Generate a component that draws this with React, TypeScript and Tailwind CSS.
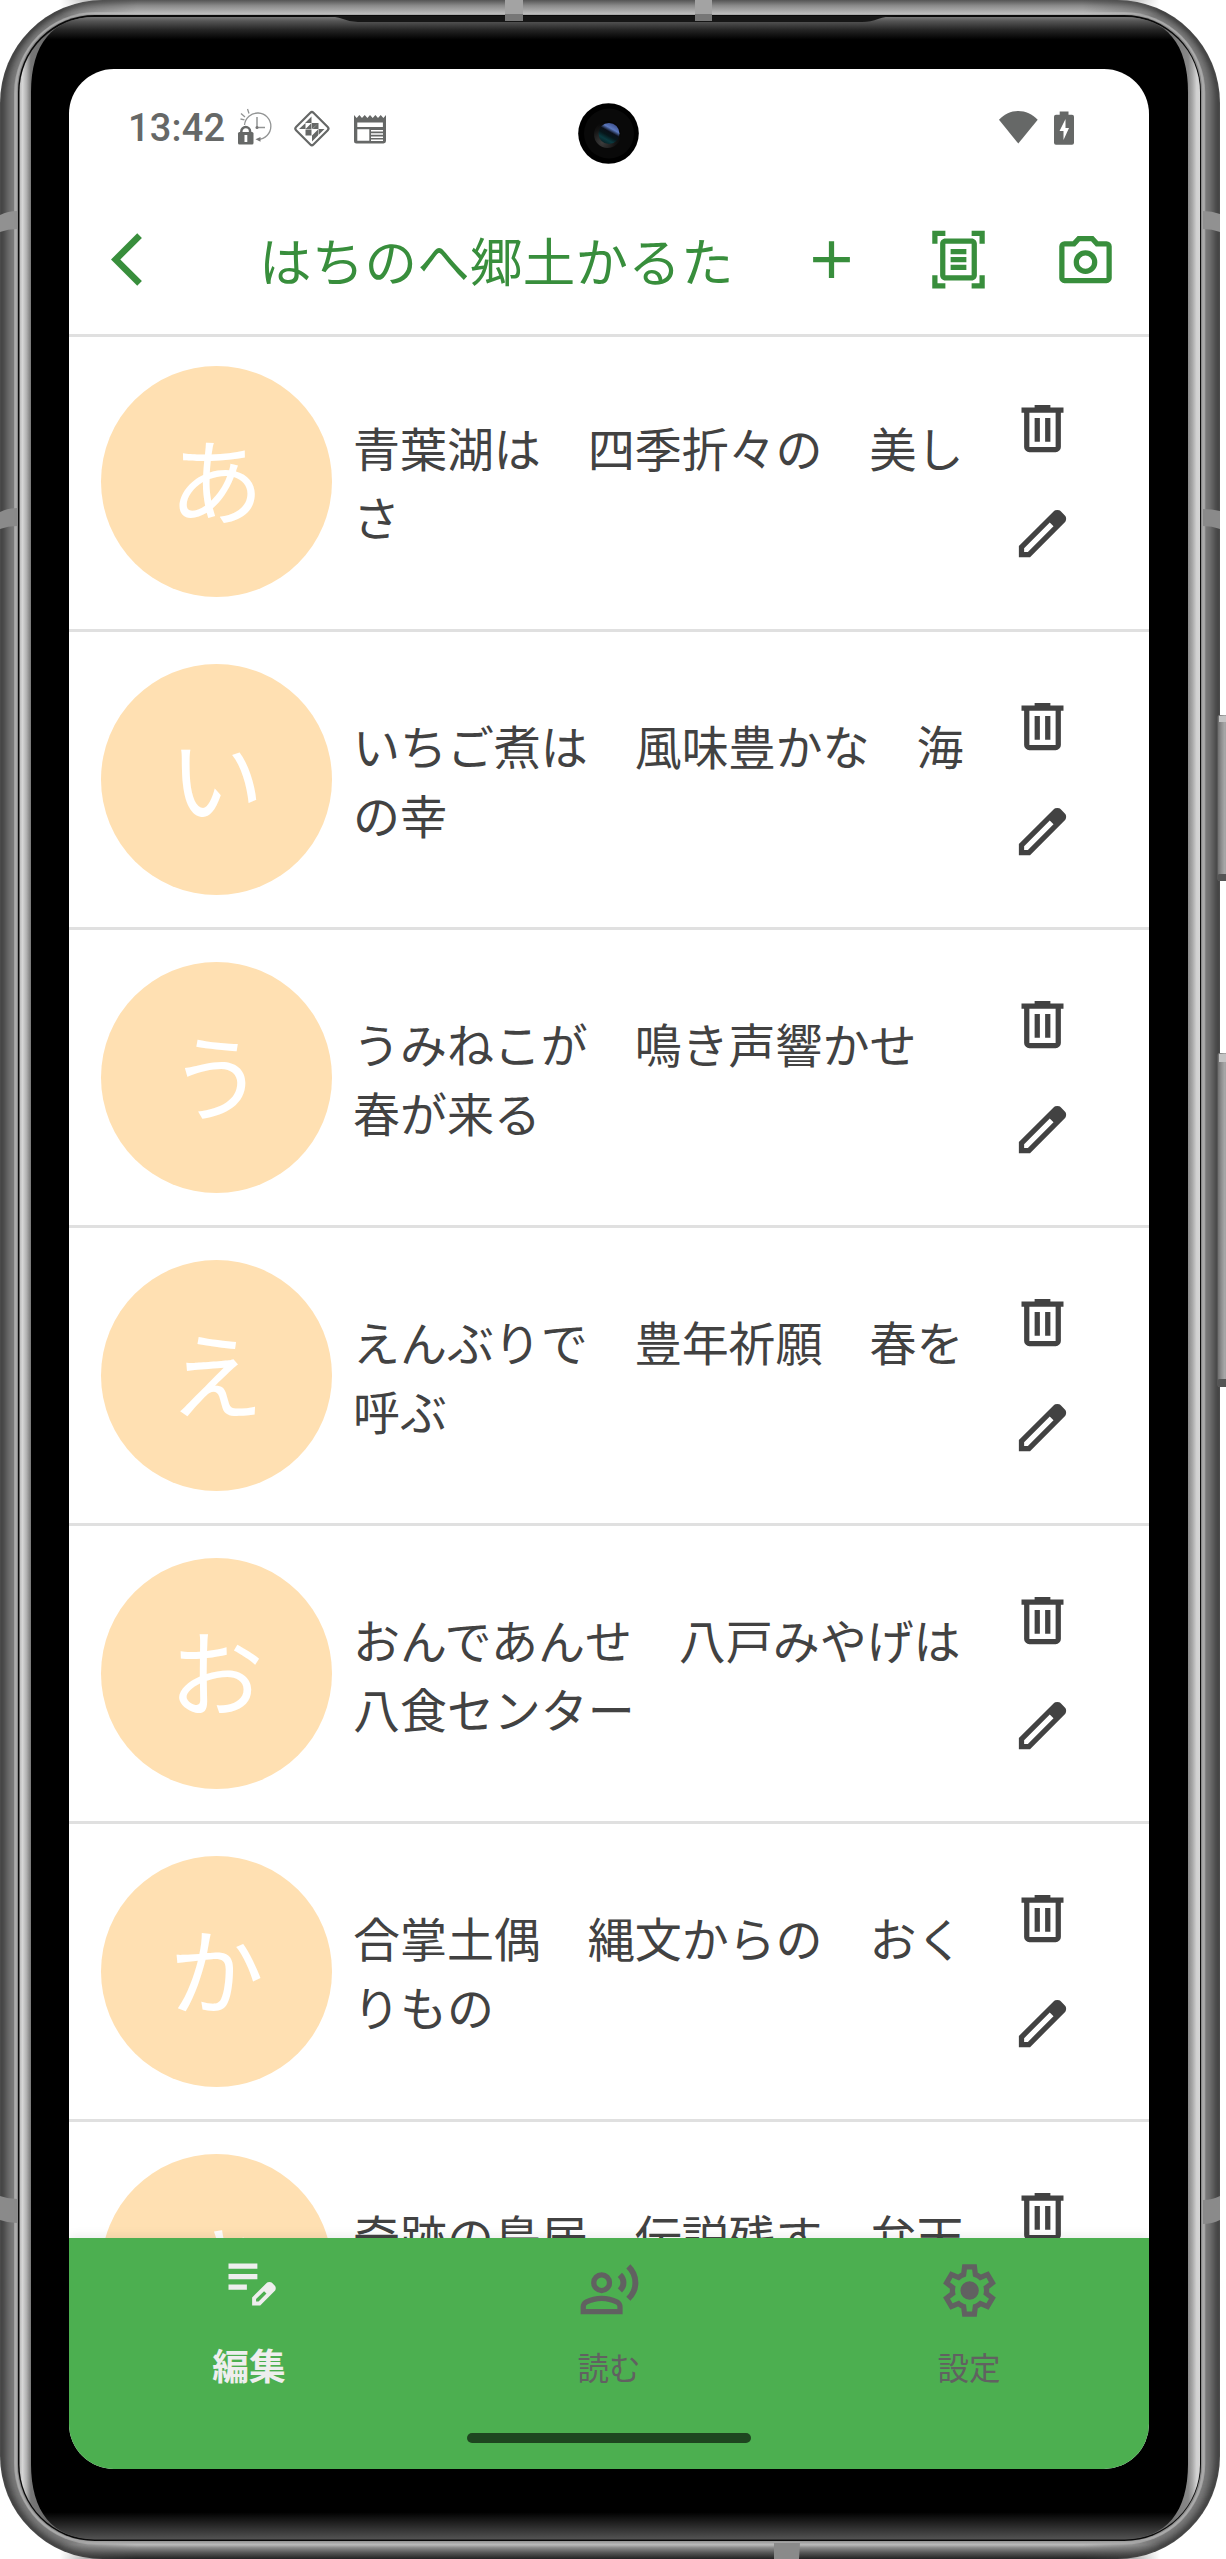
import React from "react";

const JP = "font-['Noto_Sans_CJK_JP',sans-serif]";

type SymbolProps = { d: string; className?: string };

function Symbol({ d, className = "" }: SymbolProps) {
  return (
    <svg viewBox="0 -960 960 960" className={`size-[63px] shrink-0 ${className}`} fill="currentColor" aria-hidden="true">
      <path d={d} />
    </svg>
  );
}

const PATHS = {
  back: "M400-80 0-480l400-400 71 71-329 329 329 329-71 71Z",
  add: "M440-440H200v-80h240v-240h80v240h240v80H520v240h-80v-240Z",
  camera:
    "M480-260q75 0 127.5-52.5T660-440q0-75-52.5-127.5T480-620q-75 0-127.5 52.5T300-440q0 75 52.5 127.5T480-260Zm0-80q-42 0-71-29t-29-71q0-42 29-71t71-29q42 0 71 29t29 71q0 42-29 71t-71 29ZM160-120q-33 0-56.5-23.5T80-200v-480q0-33 23.5-56.5T160-760h126l74-80h240l74 80h126q33 0 56.5 23.5T880-680v480q0 33-23.5 56.5T800-120H160Zm0-80h640v-480H638l-73-80H395l-73 80H160v480Z",
  trash:
    "M280-120q-33 0-56.5-23.5T200-200v-520h-40v-80h200v-40h240v40h200v80h-40v520q0 33-23.5 56.5T680-120H280Zm400-600H280v520h400v-520ZM360-280h80v-360h-80v360Zm160 0h80v-360h-80v360Z",
  edit: "M200-200h57l391-391-57-57-391 391v57Zm-80 80v-170l528-527q12-11 26.5-17t30.5-6q16 0 31 6t26 18l55 56q12 11 17.5 26t5.5 30q0 16-5.5 30.5T817-647L290-120H120Z",
  editNote:
    "M160-400v-80h280v80H160Zm0-160v-80h440v80H160Zm0-160v-80h440v80H160Zm360 560v-123l221-220q9-9 20-13t22-4q12 0 23 4.5t20 13.5l37 37q8 9 12.5 20t4.5 22q0 11-4 22.5T863-380L643-160H520Zm60-60h38l121-122-37-37-122 121v38Z",
  voice:
    "M798-322l-62-62q44-41 68.5-96.5T829-600q0-64-24.5-119.5T736-816l62-64q55 53 88.5 124.5T920-600q0 84-33.5 155.5T798-322ZM670-450l-64-64q18-17 29-38.5t11-47.5q0-26-11-47.5T606-686l64-64q32 29 50 67.5t18 82.5q0 44-18 82.5T670-450ZM360-440q-66 0-113-47t-47-113q0-66 47-113t113-47q66 0 113 47t47 113q0 66-47 113t-113 47ZM40-120v-112q0-34 17.5-62.5T104-338q62-31 126-46.5T360-400q66 0 130 15.5T616-338q29 15 46.5 43.5T680-232v112H40Zm80-80h480v-32q0-11-5.5-20T580-266q-54-27-109-40.5T360-320q-56 0-111 13.5T140-266q-9 5-14.5 14t-5.5 20v32Zm240-320q33 0 56.5-23.5T440-600q0-33-23.5-56.5T360-680q-33 0-56.5 23.5T280-600q0 33 23.5 56.5T360-520Z",
  settings:
    "M370-80l-16-128q-13-5-24.5-12T307-235l-119 50L78-375l103-78q-1-7-1-13.5v-27q0-6.5 1-13.5L78-585l110-190 119 50q11-8 23-15t24-12l16-128h220l16 128q13 5 24.5 12t22.5 15l119-50 110 190-103 78q1 7 1 13.5v27q0 6.5-2 13.5l103 78-110 190-118-50q-11 8-23 15t-24 12L590-80H370Zm70-80h79l14-106q31-8 57.5-23.5T639-327l99 41 39-68-86-65q5-14 7-29.5t2-31.5q0-16-2-31.5t-7-29.5l86-65-39-68-99 42q-22-23-48.5-38.5T533-694l-13-106h-79l-14 106q-31 8-57.5 23.5T321-633l-99-41-39 68 86 64q-5 15-7 30t-2 32q0 16 2 31t7 30l-86 65 39 68 99-42q22 23 48.5 38.5T427-266l13 106Zm42-180q58 0 99-41t41-99q0-58-41-99t-99-41q-59 0-99.5 41T342-480q0 58 40.5 99t99.5 41Z",
};

function DocumentScanner() {
  return (
    <svg viewBox="0 0 24 24" className="size-[63px] shrink-0" fill="currentColor" aria-hidden="true">
      <path d="M7 3H4v3H2V1h5v2zm15 3V1h-5v2h3v3h2zM7 21H4v-3H2v5h5v-2zm13-3v3h-3v2h5v-5h-2zM17 18H7V6h10v12zm2 0V6c0-1.1-.9-2-2-2H7c-1.1 0-2 .9-2 2v12c0 1.1.9 2 2 2h10c1.1 0 2-.9 2-2zM15 8H9v2h6V8zm0 3H9v2h6v-2zm0 3H9v2h6v-2z" />
    </svg>
  );
}

/* Metal frame, side buttons, antenna bands and the black glass of the phone. */
const RING = [
  "#4a4a4a", "#454545", "#474747", "#4b4b4b", "#505050", "#565656", "#5c5c5c", "#626262",
  "#676767", "#6c6c6c", "#707070", "#747474", "#777777", "#7a7a7a", "#a2a2a2", "#ababab", "#a8a8a8", "#8a8a8a",
];

function PhoneBody() {
  return (
    <svg className="absolute inset-0" width="1226" height="2559" viewBox="0 0 1226 2559" aria-hidden="true">
      <defs>
        <linearGradient id="button" x1="0" x2="1" y1="0" y2="0">
          <stop offset="0" stopColor="#6a6a6a" />
          <stop offset="0.3" stopColor="#8c8c8c" />
          <stop offset="0.6" stopColor="#a8a8a8" />
          <stop offset="1" stopColor="#909090" />
        </linearGradient>
        <linearGradient id="topMetal" x1="0" x2="0" y1="0" y2="1">
          <stop offset="0" stopColor="#555" />
          <stop offset="0.35" stopColor="#8a8a8a" />
          <stop offset="0.85" stopColor="#bcbcbc" />
          <stop offset="1" stopColor="#8a8a8a" />
        </linearGradient>
        <linearGradient id="bottomMetal" x1="0" x2="0" y1="0" y2="1">
          <stop offset="0" stopColor="#8a8a8a" />
          <stop offset="0.25" stopColor="#bbb" />
          <stop offset="0.4" stopColor="#8c8c8c" />
          <stop offset="0.65" stopColor="#5a5a5a" />
          <stop offset="1" stopColor="#222" />
        </linearGradient>
        <linearGradient id="edge" gradientUnits="userSpaceOnUse" x1="19" x2="1200" y1="0" y2="0">
          <stop offset="0" stopColor="#b5b5b5" />
          <stop offset="0.003" stopColor="#d6d6d6" />
          <stop offset="0.0065" stopColor="#b0b0b0" />
          <stop offset="0.01" stopColor="#777" />
          <stop offset="0.05" stopColor="#555" />
          <stop offset="0.95" stopColor="#555" />
          <stop offset="0.99" stopColor="#888" />
          <stop offset="0.9935" stopColor="#a8a8a8" />
          <stop offset="0.997" stopColor="#d0d0d0" />
          <stop offset="1" stopColor="#d6d6d6" />
        </linearGradient>
        <linearGradient id="glass" gradientUnits="userSpaceOnUse" x1="0" x2="0" y1="17" y2="2540">
          <stop offset="0" stopColor="#777" />
          <stop offset="0.0016" stopColor="#555" />
          <stop offset="0.005" stopColor="#262626" />
          <stop offset="0.009" stopColor="#000" />
          <stop offset="0.989" stopColor="#000" />
          <stop offset="0.994" stopColor="#262626" />
          <stop offset="1" stopColor="#555" />
        </linearGradient>
        <linearGradient id="fadeX" x1="0" x2="1" y1="0" y2="0">
          <stop offset="0" stopColor="#000" />
          <stop offset="0.07" stopColor="#fff" />
          <stop offset="0.93" stopColor="#fff" />
          <stop offset="1" stopColor="#000" />
        </linearGradient>
        <mask id="sides" maskUnits="userSpaceOnUse" x="60" y="0" width="1100" height="2559">
          <rect x="60" y="0" width="1100" height="2559" fill="url(#fadeX)" />
        </mask>
      </defs>
      {RING.map((fill, i) => (
        <rect
          key={i}
          x={i}
          y={i * 0.86}
          width={1220 - i * 2.05}
          height={2559 - i * 1.9}
          rx={103 - i * 1.55}
          fill={fill}
        />
      ))}
      <rect x="1217.5" y="715" width="12" height="166" rx="2" fill="url(#button)" />
      <rect x="1217.5" y="874" width="12" height="7" rx="2" fill="#555" />
      <rect x="1219" y="716" width="10" height="6" fill="#c4c4c4" />
      <rect x="1217.5" y="1053" width="12" height="334" rx="2" fill="url(#button)" />
      <rect x="1217.5" y="1379" width="12" height="8" rx="2" fill="#555" />
      <rect x="1219" y="1054" width="10" height="8" fill="#c4c4c4" />
      <g mask="url(#sides)">
        <rect x="60" y="0" width="1100" height="16" fill="url(#topMetal)" />
        <rect x="60" y="2540" width="1100" height="19" fill="url(#bottomMetal)" />
      </g>
      <g fill="#a3a3a3">
        <rect x="505" y="0" width="18" height="21" />
        <rect x="695" y="0" width="17" height="21" />
        <path d="M774 2543h26l-1 16h-25z" fill="#8a8a8a" />
        <path d="M0 215q8-4 17-4v18q-9 0-17 3z" fill="#919191" />
        <path d="M0 512q8-4 17-4v18q-9 0-17 3z" fill="#8a8a8a" />
        <path d="M1203 211q9 0 17 3v18q-8-3-17-3z" fill="#919191" />
        <path d="M1203 509q9 0 17 2v18q-8-3-17-3z" fill="#8a8a8a" />
        <path d="M0 2196q8 3 17 3v24q-9 0-17-3z" fill="#8a8a8a" />
        <path d="M1203 2200q9 0 17-4v24q-8 4-17 4z" fill="#8a8a8a" />
      </g>
      <rect x="18" y="15" width="1183" height="2526" rx="77" fill="#0a0a0a" />
      <rect x="19.5" y="17" width="1180.5" height="2522.5" rx="75" fill="url(#edge)" />
      <path
        d="M31 92C31 45 52 17 95 17H1124C1167 17 1188 45 1188 92V2464C1188 2511 1167 2539 1124 2539H95C52 2539 31 2511 31 2464Z"
        fill="url(#glass)"
      />
      <path d="M320 16H900Q885 16 878 19T862 22H358Q350 22 343 19T320 16Z" fill="#161616" />
      <rect x="505" y="14" width="18" height="7" fill="#777" />
      <rect x="695" y="14" width="17" height="7" fill="#777" />
    </svg>
  );
}

function CameraHole() {
  return (
    <svg viewBox="0 0 61 61" className="absolute top-[34px] left-[509px] size-[61px]" aria-hidden="true">
      <defs>
        <radialGradient id="ringGlow" cx="0.3" cy="0.8" r="0.8">
          <stop offset="0" stopColor="#3c3c3c" />
          <stop offset="0.6" stopColor="#141414" />
          <stop offset="1" stopColor="#050505" />
        </radialGradient>
        <linearGradient id="lens" x1="0.75" x2="0.25" y1="0.05" y2="0.95">
          <stop offset="0" stopColor="#3d4f8c" />
          <stop offset="0.25" stopColor="#5b78bd" />
          <stop offset="0.42" stopColor="#0a0f18" />
          <stop offset="0.6" stopColor="#06161a" />
          <stop offset="0.8" stopColor="#0a3a40" />
          <stop offset="1" stopColor="#082226" />
        </linearGradient>
      </defs>
      <circle cx="30.5" cy="30.5" r="30.3" fill="#000" />
      <circle cx="31" cy="30.5" r="25" fill="#090909" />
      <circle cx="29.5" cy="31.5" r="13.5" fill="url(#ringGlow)" />
      <circle cx="31" cy="30.5" r="10.5" fill="url(#lens)" />
    </svg>
  );
}

function StatusIcons() {
  return (
    <svg width="150" height="44" viewBox="236 106 150 44" className="shrink-0" aria-hidden="true">
      <g fill="none" stroke="#929494" strokeWidth="1.3">
        <path d="M244.5 125A13.2 13.2 0 1 1 258 139.4" />
        <path d="M257 117v10.5h8" strokeWidth="1.5" />
        <path d="M241 113.5l4 3.5M247.5 109l1.5 4.5M240.5 119l4 .8" />
      </g>
      <circle cx="257" cy="127.5" r="1.5" fill="#777" />
      <path d="M255.5 139.3l5-2.4v4.8z" fill="#777" />
      <rect x="238" y="132" width="15.5" height="12.5" rx="1.5" fill="#666867" />
      <path d="M241.3 133v-1.5a4.4 4.4 0 0 1 8.8 0v1.5" fill="none" stroke="#666867" strokeWidth="2.5" />
      <path d="M244.5 135h2.8v7h-2.8z" fill="#fff" />
      <rect x="299.6" y="116.3" width="24.6" height="24.6" rx="2.2" transform="rotate(45 311.9 128.6)" fill="none" stroke="#666867" strokeWidth="2.2" />
      <path
        fill="#666867"
        d="M311.5 116.5v6.500h-6.500zM311.5 123v6h-6zM305.5 123v6h-6.500zM312 123h6.500l-6.500 6zM318.5 123v6h-6zM324.5 129h-6v6zM311.5 129.500v6h-6zM305.5 129.500h6l-6 6zM318 129.500v6h-6zM312 135.500h6l-6 6z"
      />
      <path
        fillRule="evenodd"
        fill="#666867"
        d="M354 115l2.7 3 2.7-3 2.6 3 2.7-3 2.7 3 2.6-3 2.7 3 2.7-3 2.6 3 2.7-3 2.7 3 2.6-3v26a2.5 2.5 0 0 1-2.5 2.5h-27a2.5 2.5 0 0 1-2.5-2.5zM357.3 122.5v4.5h25.6v-4.5zM357.3 129.3v11.4h12v-11.4zM371 130v1.6h12v-1.6zM371 133.2v1.6h12v-1.6zM371 136.4v1.6h12v-1.6zM371 139.4v1.5h12v-1.5z"
      />
    </svg>
  );
}

function SystemIcons() {
  return (
    <svg width="76" height="34" viewBox="999 111 76 34" className="shrink-0" aria-hidden="true">
      <path d="M1018.3 143.5L999 119.8C1004.5 114 1011 111 1018.3 111S1032.2 114 1037.7 119.8Z" fill="#666867" />
      <path
        fillRule="evenodd"
        fill="#666867"
        d="M1059.7 111.5h8.8v3.3h3.5a2 2 0 0 1 2 2v26a2 2 0 0 1-2 2h-16a2 2 0 0 1-2-2v-26a2 2 0 0 1 2-2h3.7zM1065.5 119l-6 12h4v9l5.5-12h-3.5z"
      />
    </svg>
  );
}

const CARDS: { kana: string; lines: string[] }[] = [
  { kana: "あ", lines: ["青葉湖は　四季折々の　美し", "さ"] },
  { kana: "い", lines: ["いちご煮は　風味豊かな　海", "の幸"] },
  { kana: "う", lines: ["うみねこが　鳴き声響かせ", "春が来る"] },
  { kana: "え", lines: ["えんぶりで　豊年祈願　春を", "呼ぶ"] },
  { kana: "お", lines: ["おんであんせ　八戸みやげは", "八食センター"] },
  { kana: "か", lines: ["合掌土偶　縄文からの　おく", "りもの"] },
  { kana: "き", lines: ["奇跡の鳥居　伝説残す　弁天", "島"] },
];

function CardRow({ kana, lines }: { kana: string; lines: string[] }) {
  return (
    <li className="flex h-[298px] shrink-0 border-b-[3px] border-[#e0e0e0] pl-8">
      <div className="mt-8 flex size-[231px] shrink-0 items-center justify-center rounded-full bg-[#ffe0b2] pb-[9px] text-[94.5px] leading-none text-white">
        {kana}
      </div>
      <div className="ml-[21px] flex h-[293px] w-[658px] shrink-0 flex-col justify-center text-[47px] leading-[69px] tracking-[-0.05px] whitespace-pre text-[#424242]">
        {lines.map((line) => (
          <span key={line}>{line}</span>
        ))}
      </div>
      <div className="flex flex-col gap-[42px] pt-[63px] text-[#424242]">
        <button type="button" aria-label="削除" className="block">
          <Symbol d={PATHS.trash} />
        </button>
        <button type="button" aria-label="編集" className="block">
          <Symbol d={PATHS.edit} />
        </button>
      </div>
    </li>
  );
}

export default function App() {
  return (
    <div className={`relative flex h-[2559px] w-[1226px] overflow-hidden bg-white pt-[69px] pl-[69px] ${JP}`}>
      <PhoneBody />
      <main className="relative flex h-[2400px] w-[1080px] flex-col overflow-hidden rounded-[45px] bg-white">
        <div className="flex h-[116px] shrink-0 items-center pt-0.5 pr-[74px] pl-[59px]">
          <span className="w-[108px] shrink-0 pb-px font-['Roboto'] text-[38px] leading-none font-medium tracking-[0.2px] text-[#666867]">
            13:42
          </span>
          <StatusIcons />
          <div className="ml-auto">
            <SystemIcons />
          </div>
        </div>
        <CameraHole />

        <header className="relative z-10 flex h-[152px] shrink-0 items-center border-b-[3px] border-[#e0e0e0] pl-[42px] text-[#388e3c]">
          <Symbol d={PATHS.back} />
          <h1 className="ml-[85px] w-[475px] pb-px text-[52.5px] leading-none tracking-[0.25px] whitespace-nowrap">
            はちのへ郷土かるた
          </h1>
          <div className="ml-[66px] flex gap-16">
            <Symbol d={PATHS.add} />
            <DocumentScanner />
            <Symbol d={PATHS.camera} />
          </div>
        </header>

        <ul className="-mt-[3px] flex min-h-0 flex-1 flex-col overflow-hidden">
          {CARDS.map((card) => (
            <CardRow key={card.kana} {...card} />
          ))}
        </ul>

        <nav className="relative flex h-[231px] shrink-0 flex-col bg-[#4caf50] shadow-[0_-2px_10px_rgba(0,0,0,0.08)]">
          <div className="grid grid-cols-3 text-[31.5px] leading-none text-[#616161]">
            <div className="flex flex-col items-center gap-[30px] pt-[15px] text-[36.75px] font-bold text-[#eeeeee]">
              <Symbol d={PATHS.editNote} />
              <span>編集</span>
            </div>
            <div className="flex flex-col items-center gap-[29px] pt-[21px]">
              <Symbol d={PATHS.voice} />
              <span>読む</span>
            </div>
            <div className="flex flex-col items-center gap-[29px] pt-[21px]">
              <Symbol d={PATHS.settings} />
              <span>設定</span>
            </div>
          </div>
          <div className="mx-auto mt-auto mb-[26px] h-[10px] w-[284px] rounded-full bg-[#1e4620]" />
        </nav>
      </main>
    </div>
  );
}
